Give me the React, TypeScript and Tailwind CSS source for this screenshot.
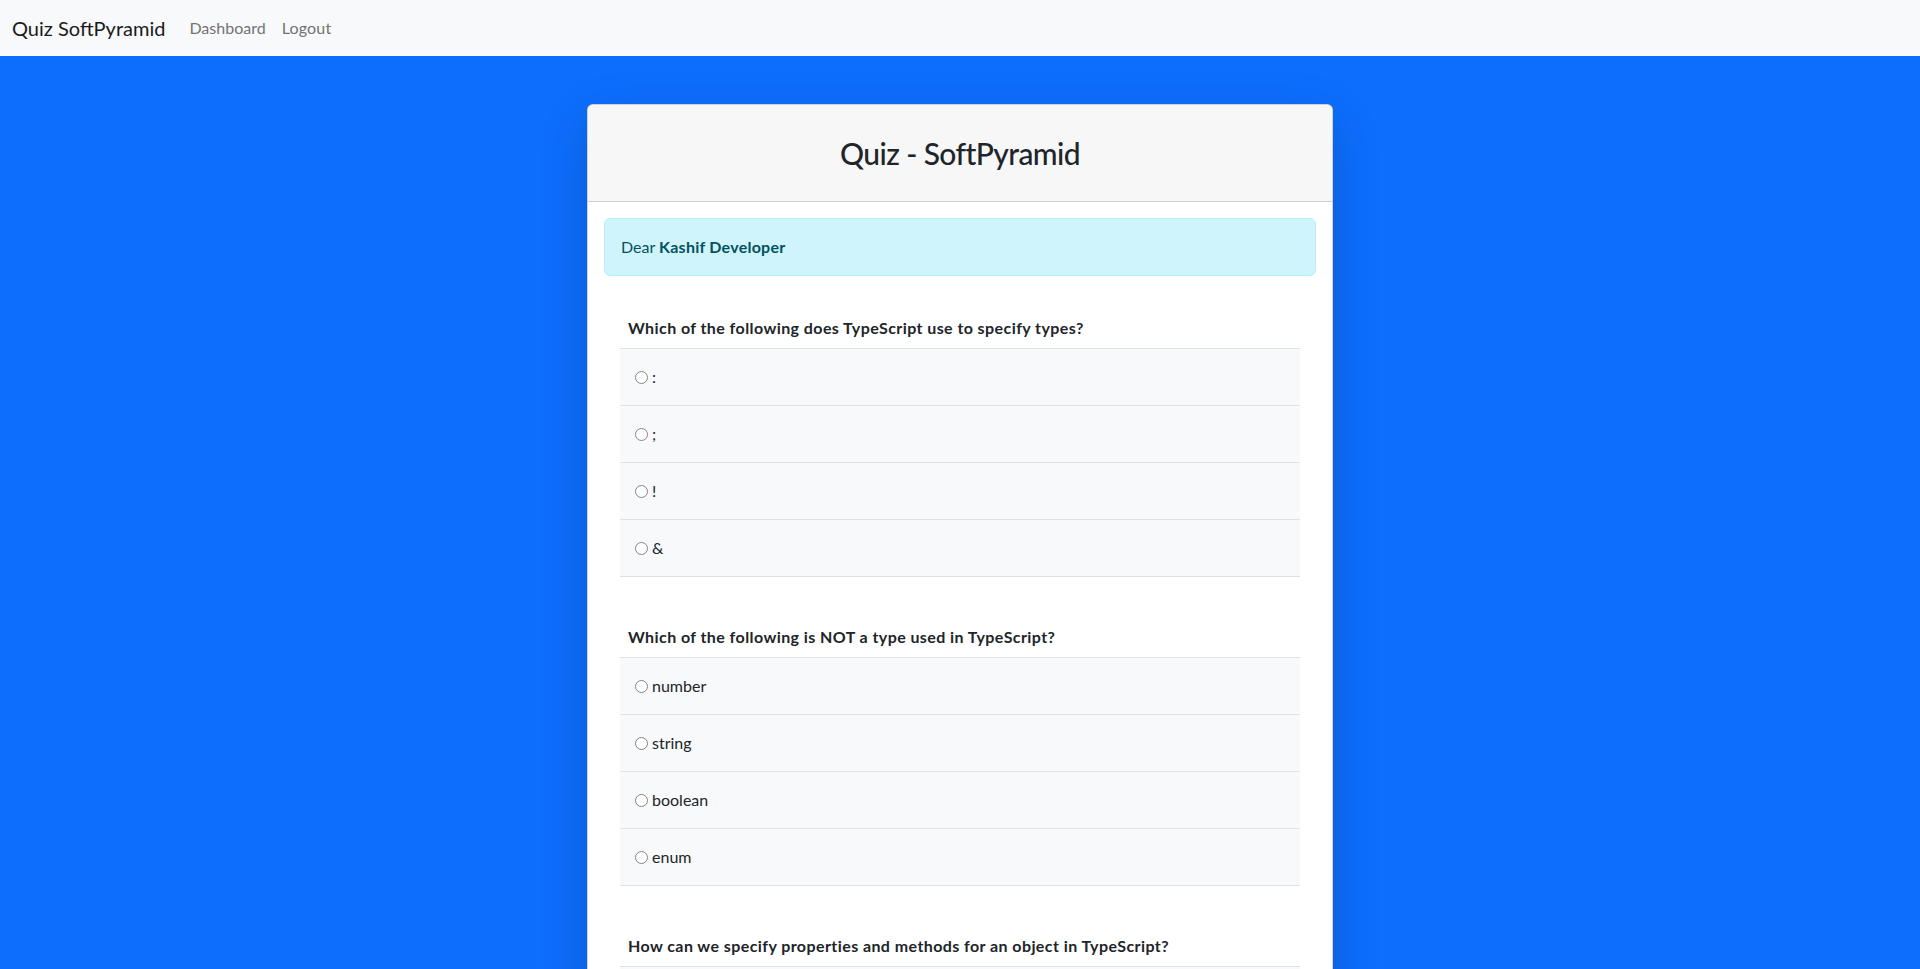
import React from "react";

const questions = [
  {
    q: "Which of the following does TypeScript use to specify types?",
    options: [":", ";", "!", "&"],
  },
  {
    q: "Which of the following is NOT a type used in TypeScript?",
    options: ["number", "string", "boolean", "enum"],
  },
  {
    q: "How can we specify properties and methods for an object in TypeScript?",
    options: ["Use classes.", "Use interfaces.", "Use enums.", "Use async/await."],
  },
];

function Radio() {
  return (
    <span className="inline-block w-[13px] h-[13px] rounded-full border border-[#858585] bg-white shrink-0" />
  );
}

export default function App() {
  return (
    <div
      className="min-h-screen bg-[#0d6efd] text-[#212529]"
      style={{ fontFamily: "Lato, 'Open Sans', sans-serif" }}
    >
      <nav className="h-[56px] bg-[#f8f9fa] flex items-center px-3">
        <span className="text-[20px] leading-[30px] text-[#1a1a1a] mr-4">Quiz SoftPyramid</span>
        <span className="text-[16px] leading-6 text-[#737373] px-2">Dashboard</span>
        <span className="text-[16px] leading-6 text-[#737373] px-2 tracking-[0.2px]">Logout</span>
      </nav>

      <div className="pt-12 pb-12">
        <div className="w-[746px] mx-auto bg-white border border-[rgba(0,0,0,0.175)] rounded-[6px] shadow-[0_1rem_3rem_rgba(0,0,0,0.175)] overflow-hidden">
          <div className="h-[97px] bg-[#f7f7f7] border-b border-[#cfcfcf] flex items-center justify-center">
            <h2 className="text-[30px] leading-[38px] font-medium tracking-[-0.6px] text-[#212529]">Quiz - SoftPyramid</h2>
          </div>
          <div className="p-4">
            <div className="bg-[#cff4fc] border border-[#b6effb] rounded-[6px] px-4 py-4 text-[16px] leading-6 text-[#055160] mb-4">
              Dear <b className="font-bold tracking-[0.25px]">Kashif Developer</b>
            </div>
            {questions.map((item, i) => (
              <div key={i} className="p-4 mb-2">
                <div className="p-2 text-[16px] leading-6 font-bold tracking-[0.42px] text-[#212529]">{item.q}</div>
                <div className="border-b border-[#dee2e6]">
                  {item.options.map((o, j) => (
                    <div
                      key={j}
                      className="bg-[#f8f9fa] border-t border-[#dee2e6] pl-[15px] pr-4 py-4 h-[57px] flex items-center gap-[4px] text-[16px] leading-6"
                    >
                      <Radio />
                      <span>{o}</span>
                    </div>
                  ))}
                </div>
              </div>
            ))}
          </div>
        </div>
      </div>
    </div>
  );
}
